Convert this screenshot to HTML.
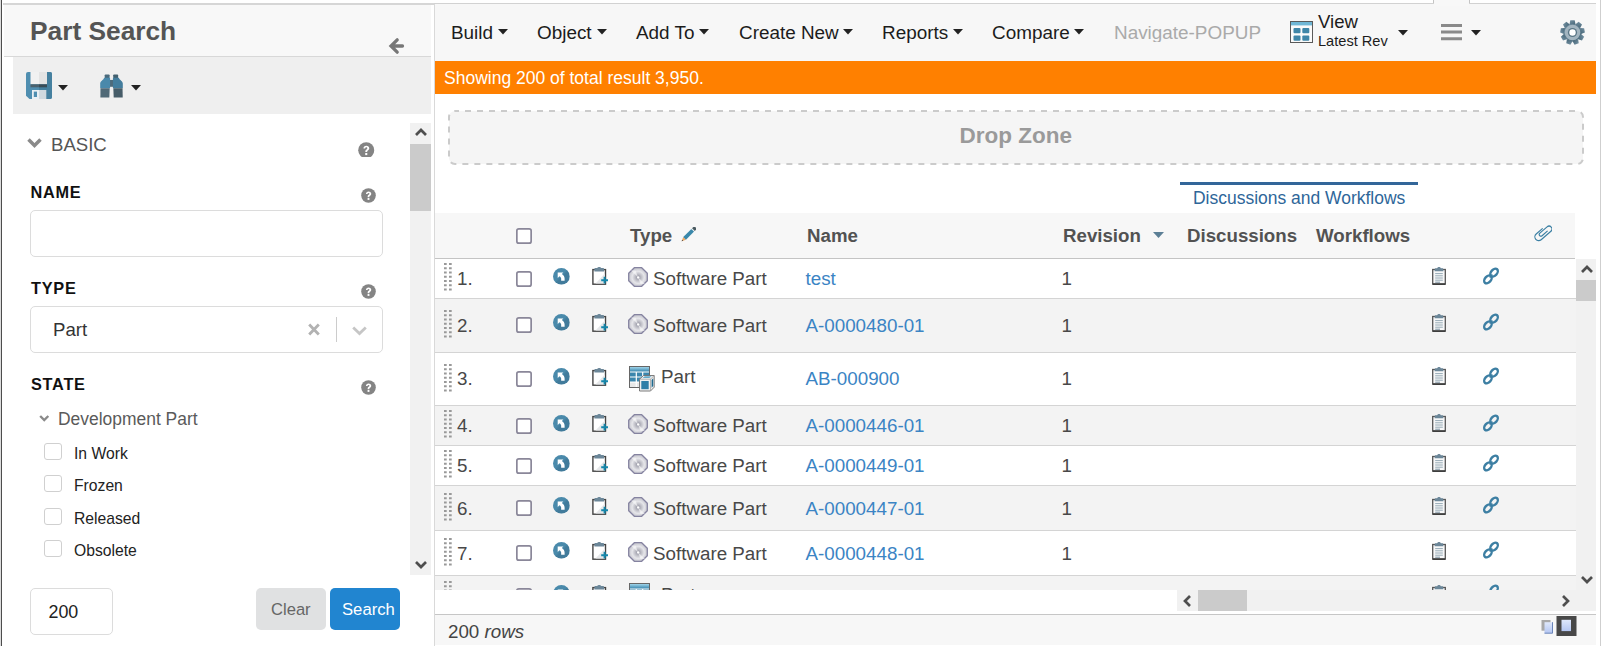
<!DOCTYPE html>
<html lang="en">
<head>
<meta charset="utf-8">
<title>Part Search</title>
<style>
*{box-sizing:border-box;margin:0;padding:0}
html,body{width:1601px;height:646px;overflow:hidden;background:#fff}
body{font-family:"Liberation Sans",sans-serif;color:#333;position:relative;font-size:18px}
.abs{position:absolute}
.t{position:absolute;white-space:nowrap;line-height:1;margin-top:.8px}
svg.ic{position:absolute;overflow:visible}
#leftedge{left:0;top:0;width:2px;height:646px;background:#4d4d4d;border-left:1px solid #dcdcdc}
#topline{left:3px;top:3px;width:431px;height:2px;background:#d6d6d6}
#topline2{left:434px;top:3px;width:1162px;height:1px;background:#d2d2d2}
#notch{left:1434px;top:0;width:35px;height:6px;background:#f8f8f8}
.nl{top:0;width:1px;height:3px;background:#c4c4c4}
#redge{left:1600px;top:0;width:1px;height:646px;background:#cfcfcf}
#lhead{left:4px;top:5px;width:427px;height:51px;background:#f8f8f8}
#lheadb{left:4px;top:56px;width:427px;height:1px;background:#d8d8d8}
#ltool{left:13px;top:57px;width:418px;height:57px;background:#efefef}
#lsep{left:434px;top:4px;width:1px;height:642px;background:#d9d9d9}
#lscroll{left:410px;top:123px;width:21px;height:452px;background:#f1f1f1}
#lthumb{left:410px;top:144px;width:21px;height:67px;background:#cbcbcb}
.lbl{margin-top:0;font-weight:bold;font-size:16.3px;color:#111;letter-spacing:.75px}
.inp{border:1px solid #dcdcdc;border-radius:5px;background:#fff}
.cb{width:18px;height:17px;border:1px solid #d0d0d0;border-radius:3px;background:#fff}
.cbl{font-size:15.7px;color:#222;margin-top:0}
#rtool{left:435px;top:4px;width:1161px;height:57px;background:#f7f7f7}
#orange{left:435px;top:61px;width:1161px;height:33px;background:#ff8000}
.menu{font-size:18.9px;color:#1c1c1c;top:23px}
#dz{left:449px;top:111px;width:1134px;height:53px;border-radius:6px;background:#f5f5f5}
#thead{left:435px;top:213px;width:1140px;height:45px;background:#f7f7f7}
#theadb{left:435px;top:258px;width:1140px;height:1px;background:#c4c4c4}
.th{font-weight:bold;font-size:18.7px;color:#525252;top:226px}
.row{left:435px;width:1141px;border-bottom:1px solid #d4d4d4;background:#fff}
.row.alt{background:#f3f3f3}
.rcb{width:17px;height:17px;border:2px solid #908e9e;border-radius:2.5px;background:#fff}
.rt{margin-top:0}
.num,.ty,.rev{font-size:18.8px;color:#484848}
.lnk{font-size:18.8px;color:#3b84c4}
#cover{left:435px;top:590px;width:1161px;height:24px;background:#fff}
#vscroll{left:1576px;top:259px;width:20px;height:331px;background:#f1f1f1}
#vthumb{left:1576px;top:280px;width:20px;height:21px;background:#cbcbcb}
#hscroll{left:1177px;top:590px;width:419px;height:21px;background:#f1f1f1}
#hthumb{left:1198px;top:590px;width:49px;height:21px;background:#cbcbcb}
#foot{left:435px;top:614px;width:1161px;height:31px;background:#f7f7f7;border-top:1px solid #c6c6c6}
</style>
</head>
<body>
<svg width="0" height="0" style="position:absolute"><defs>
<linearGradient id="g-cd" x1="0" y1="0" x2="1" y2="1"><stop offset="0" stop-color="#b2b2ba"/><stop offset=".5" stop-color="#f0f0f3"/><stop offset="1" stop-color="#a6a6b0"/></linearGradient>
<radialGradient id="g-cd3" cx=".51" cy=".52" r=".5"><stop offset="0" stop-color="#8e8e9c"/><stop offset=".3" stop-color="#b9b9c2"/><stop offset=".65" stop-color="#e6e6ea"/><stop offset="1" stop-color="#c6c6ce"/></radialGradient>
<radialGradient id="g-cd2" cx=".5" cy=".5" r=".5"><stop offset="0" stop-color="#85859a"/><stop offset=".45" stop-color="#cacad2"/><stop offset="1" stop-color="#e9e9ee" stop-opacity=".2"/></radialGradient>
<linearGradient id="g-hd" x1="0" y1="0" x2="0" y2="1"><stop offset="0" stop-color="#9fd4ea"/><stop offset="1" stop-color="#2f7fa8"/></linearGradient>
<symbol id="i-caret" viewBox="0 0 10 6"><path d="M0 0h10L5 5.6z" fill="#222"/></symbol>
<symbol id="i-grip" viewBox="0 0 8 28"><g fill="#999">
<rect x="0" y="0.00" width="2.700" height="2"/><rect x="5" y="0.00" width="2.700" height="2"/>
<rect x="0" y="4.25" width="2.700" height="2"/><rect x="5" y="4.25" width="2.700" height="2"/>
<rect x="0" y="8.50" width="2.700" height="2"/><rect x="5" y="8.50" width="2.700" height="2"/>
<rect x="0" y="12.75" width="2.700" height="2"/><rect x="5" y="12.75" width="2.700" height="2"/>
<rect x="0" y="17.00" width="2.700" height="2"/><rect x="5" y="17.00" width="2.700" height="2"/>
<rect x="0" y="21.25" width="2.700" height="2"/><rect x="5" y="21.25" width="2.700" height="2"/>
<rect x="0" y="25.50" width="2.700" height="2"/><rect x="5" y="25.50" width="2.700" height="2"/>
</g></symbol>
<linearGradient id="g-nav" x1="0" y1="0" x2="1" y2="1"><stop offset=".45" stop-color="#4a8aab"/><stop offset=".55" stop-color="#417b9b"/></linearGradient><symbol id="i-nav" viewBox="0 0 17 17"><circle cx="8.500" cy="8.500" r="8.500" fill="url(#g-nav)"/>
<path d="M4.750 4.500H10.500L8.900 6.100C10.800 7.200 11.750 8.800 11.750 11V13H8.250V11C8.250 9.800 7.700 9 6.600 8.300L4.750 10.100Z" fill="#fff"/></symbol>
<symbol id="i-clipadd" viewBox="0 0 17 19">
<rect x=".9" y="2.6" width="12.6" height="14.6" fill="#fff" stroke="#444" stroke-width="1.4"/>
<path d="M12.8 6.5v10H3.5z" fill="#e6e8ea"/>
<path d="M2.400 4.600V2c0-.6.400-1 1-1h1.800C5.600.300 6.400 0 7.200 0s1.600.300 2 1H11c.6 0 1 .4 1 1v2.600z" fill="#6c8799"/>
<path d="M12.600 9.800v6.800M9.200 13.200h6.800" stroke="#1587ab" stroke-width="2" fill="none"/>
</symbol>
<symbol id="i-cd" viewBox="0 0 20 20">
<path d="M6.300 .7h7.400L19.300 6.300v7.400L13.700 19.300H6.300L.7 13.700V6.300z" fill="url(#g-cd3)" stroke="#8583a0" stroke-width="1.300" stroke-linejoin="round"/>
<path d="M10 10.300L3 3.500h4.500zM10 10.300L17 17h-4.500z" fill="#fff" opacity=".55"/>
<circle cx="10.200" cy="10.400" r="1.200" fill="#fff"/>
</symbol>
<symbol id="i-part" viewBox="0 0 26 26">
<rect x=".5" y=".5" width="20" height="21" fill="#fff" stroke="#666" stroke-width="1"/>
<rect x="1" y="1" width="19" height="5" fill="url(#g-hd)"/>
<rect x="1" y="6" width="19" height="10" fill="#3b86ad"/>
<path d="M1 6h19M1 11h19M1 16h19M7.300 6v15M13.700 6v15" stroke="#fff" stroke-width="1.200" fill="none"/>
<rect x="1" y="16.600" width="19" height="4.400" fill="#e8e8e8"/>
<path d="M7.300 16v5M13.700 16v5" stroke="#fff" stroke-width="1.200"/>
<path d="M10.500 13.200l4-3.700h10.700v11.700l-3.700 3.800h-11z" fill="#f0f0f0" stroke="#6e6e6e" stroke-width=".9"/>
<path d="M10.500 13.200h11v11.800M21.500 13.200l3.700-3.700" fill="none" stroke="#9a9a9a" stroke-width=".7"/>
<rect x="12.300" y="15" width="7.400" height="8.200" fill="#2f7fa8"/>
<path d="M13.600 12l2.200-1.700h6.800L20.400 12z" fill="#63abcb"/>
<path d="M22.600 14l1.600-1.700V20l-1.600 1.800z" fill="#1f6a90"/>
</symbol>
<symbol id="i-clip" viewBox="0 0 14 18">
<rect x=".7" y="2.500" width="12.600" height="14.600" fill="#f7f8f9" stroke="#555" stroke-width="1.300"/>
<path d="M.7 17.100h12.600" stroke="#333" stroke-width="1.500"/>
<path d="M2.700 4.200V2.200c0-.6.400-1 1-1h1.400C5.400.4 6.200 0 7 0s1.600.4 1.900 1.200h1.400c.6 0 1 .4 1 1v2z" fill="#6c8799"/>
<path d="M3.200 6.600h7.600M3.200 8.800h7.600M3.200 11h7.600M3.200 13.200h7.600" stroke="#8aa0ae" stroke-width=".9" fill="none"/>
<path d="M3.200 15.200h4.800" stroke="#6c8799" stroke-width=".9"/>
</symbol>
<symbol id="i-link" viewBox="0 0 18 18">
<g fill="none" stroke="#3d7fa3" stroke-width="2.400" transform="rotate(-48 9 9)">
<ellipse cx="4.400" cy="9" rx="4.500" ry="3"/>
<ellipse cx="13.600" cy="9" rx="4.500" ry="3"/>
<path d="M7 9h4" stroke-width="1.400"/>
</g></symbol>
<symbol id="i-help" viewBox="0 0 16 16"><circle cx="8" cy="8" r="7.800" fill="#848484"/>
<path d="M5.300 6.300c0-1.600 1.200-2.600 2.800-2.600s2.800 1 2.800 2.400c0 1.100-.6 1.700-1.300 2.200-.5.400-.7.600-.7 1.200v.3H7.100v-.5c0-1 .4-1.500 1.100-2 .5-.4.800-.7.800-1.200s-.4-.9-1-.9-1 .4-1.100 1.100z" fill="#fff"/><rect x="7" y="10.700" width="2" height="2" fill="#fff"/></symbol>
<symbol id="i-chev" viewBox="0 0 16 11"><path d="M1.600 1.600L8 8l6.400-6.400" fill="none" stroke="#8a8a8a" stroke-width="3.700"/></symbol>
<symbol id="i-sbup" viewBox="0 0 12 8"><path d="M1 7l5-5 5 5" fill="none" stroke="#4e4e4e" stroke-width="2.700"/></symbol>
<symbol id="i-sbdn" viewBox="0 0 12 8"><path d="M1 1l5 5 5-5" fill="none" stroke="#4e4e4e" stroke-width="2.700"/></symbol>
<symbol id="i-sblt" viewBox="0 0 8 12"><path d="M7 1L2 6l5 5" fill="none" stroke="#4e4e4e" stroke-width="2.700"/></symbol>
<symbol id="i-sbrt" viewBox="0 0 8 12"><path d="M1 1l5 5-5 5" fill="none" stroke="#4e4e4e" stroke-width="2.700"/></symbol>
<symbol id="i-save" viewBox="0 0 26 27">
<path d="M2 0h22a2 2 0 0 1 2 2v23a2 2 0 0 1-2 2H3.500L0 23.800V2a2 2 0 0 1 2-2z" fill="#4f8eb0"/>
<path d="M13 0h11a2 2 0 0 1 2 2v23a2 2 0 0 1-2 2H13z" fill="#45809f"/>
<rect x="4.500" y="0" width="8.500" height="12.300" fill="#f1f1f1"/><rect x="13" y="0" width="8" height="12.300" fill="#e4e4e4"/>
<rect x="4.500" y="12.300" width="8.500" height="3" fill="#4b616d"/><rect x="13" y="12.300" width="8" height="3" fill="#3a4c57"/>
<rect x="6" y="18" width="7" height="9" fill="#e9eff3"/><rect x="13" y="18" width="7.300" height="9" fill="#d0d9df"/>
<rect x="7.800" y="19.600" width="3.200" height="5.400" fill="#4f8eb0"/>
</symbol>
<symbol id="i-bino" viewBox="0 0 24 24">
<rect x="4.800" y=".2" width="5" height="4" rx=".8" fill="#4a6a7c"/><rect x="13.500" y=".2" width="5" height="4" rx=".8" fill="#42606f"/>
<rect x="9.500" y="5.800" width="4.500" height="7" fill="#4e6b7b"/>
<path d="M4.200 3.600H10.300V14.400H.2V9.500C.2 7 3.400 6.200 4.200 3.600z" fill="#4a89ab"/>
<path d="M13.200 3.600H19.300C20.100 6.200 23.300 7 23.300 9.500V14.400H13.200z" fill="#437d9d"/>
<path d="M.5 14.400H9.900L9.500 23.700H.4z" fill="#506977"/><path d="M13.600 14.400H23L23.200 23.700H14z" fill="#465c68"/>
</symbol>
<symbol id="i-view" viewBox="0 0 23 22">
<rect x=".5" y=".5" width="22" height="21" fill="#fbfbfb" stroke="#5a5a5a" stroke-width="1"/>
<rect x="1" y="1" width="21" height="3.400" fill="#6fb7d6"/>
<rect x="3.500" y="7" width="7" height="5.300" rx="1" fill="#3f86a8"/><rect x="12.300" y="7" width="7" height="5.300" rx="1" fill="#3f86a8"/>
<rect x="3.500" y="14.500" width="7" height="5.300" rx="1" fill="#3f86a8"/><rect x="12.300" y="14.500" width="7" height="5.300" rx="1" fill="#3f86a8"/>
</symbol>
<linearGradient id="g-gear" x1="0" y1="0" x2="1" y2="1"><stop offset="0" stop-color="#7793a4"/><stop offset="1" stop-color="#466678"/></linearGradient>
<symbol id="i-gear" viewBox="-12.500 -12.500 25 25">
<g fill="url(#g-gear)">
<circle r="9"/>
<g id="tooth"><path d="M-2.200 -12.200h4.400l.8 4h-6z"/></g>
<use href="#tooth" transform="rotate(40)"/><use href="#tooth" transform="rotate(80)"/><use href="#tooth" transform="rotate(120)"/><use href="#tooth" transform="rotate(160)"/><use href="#tooth" transform="rotate(200)"/><use href="#tooth" transform="rotate(240)"/><use href="#tooth" transform="rotate(280)"/><use href="#tooth" transform="rotate(320)"/>
</g>
<circle r="7.800" fill="#a3b5c0"/>
<circle r="4.600" fill="#5a7686"/>
<circle r="3.200" fill="#fff"/>
</symbol>
<symbol id="i-pencil" viewBox="0 0 15 15">
<g transform="rotate(-45 7.500 7.500)">
<path d="M-2.200 7.500l4.200-1.900v3.800z" fill="#f0a860"/><path d="M-2.200 7.500l1.500-.7v1.400z" fill="#444"/>
<rect x="2" y="5.600" width="11.500" height="3.800" fill="#3a88aa"/>
<rect x="13.500" y="5.600" width="1" height="3.800" fill="#e8eef0"/>
<rect x="14.500" y="5.600" width="3" height="3.800" fill="#4a5a60"/>
</g></symbol>
<symbol id="i-paperclip" viewBox="0 0 18 17">
<g transform="translate(9.200 7.900) rotate(-41) translate(-10.400 -4.400)" fill="none" stroke="#3a7fa3" stroke-width="1.150">
<path d="M13 .6H4.400a3.800 3.800 0 0 0 0 7.600H17.300a2.900 2.900 0 0 0 0-5.800H7.700a1.700 1.700 0 0 0 0 3.400H15"/>
</g></symbol>
<linearGradient id="g-fi" x1="0" y1="0" x2="0" y2="1"><stop offset="0" stop-color="#dfe8fb"/><stop offset="1" stop-color="#b4c6f2"/></linearGradient>
<symbol id="i-footic" viewBox="0 0 36 21">
<rect x=".5" y="4" width="9" height="10.700" fill="#a8a8a8"/>
<rect x="3.500" y="6.200" width="8" height="11" fill="url(#g-fi)"/><path d="M3.500 17.200h8V6.200" fill="none" stroke="#6a84b8" stroke-width="1"/>
<rect x="15.500" y="0" width="20" height="20" fill="#484848"/>
<rect x="20.500" y="3.800" width="9.500" height="11.300" fill="url(#g-fi)"/>
</symbol>
<symbol id="i-cb" viewBox="0 0 16 16"><rect x=".85" y=".85" width="14.300" height="14.300" rx="2" fill="#fff" stroke="#8a8799" stroke-width="1.700"/></symbol>
</defs></svg>
<div class="abs" id="leftedge"></div>
<div class="abs" id="topline"></div>
<div class="abs" id="topline2"></div>
<div class="abs" id="redge"></div>
<div class="abs" id="lhead"></div>
<div class="abs" id="lheadb"></div>
<div class="abs" id="ltool"></div>
<div class="abs" id="lsep"></div>
<div class="t" style="left:30px;top:17px;font-size:26.3px;font-weight:bold;color:#555">Part Search</div>
<svg class="ic" style="left:389px;top:38px" width="15" height="16" viewBox="0 0 15 16"><path d="M8.200 1.800L2 8l6.200 6.200M2.500 8h11" fill="none" stroke="#777" stroke-width="3.300" stroke-linecap="round" stroke-linejoin="miter"/></svg>
<svg class="ic" style="left:26px;top:72px" width="26" height="27"><use href="#i-save"/></svg>
<svg class="ic" style="left:58px;top:85px" width="10" height="6"><use href="#i-caret"/></svg>
<svg class="ic" style="left:100.300px;top:73.500px" width="23.500" height="24"><use href="#i-bino"/></svg>
<svg class="ic" style="left:131px;top:85px" width="10" height="6"><use href="#i-caret"/></svg>

<div class="abs" id="lscroll"></div>
<div class="abs" id="lthumb"></div>
<svg class="ic" style="left:414.500px;top:128px" width="12" height="8"><use href="#i-sbup"/></svg>
<svg class="ic" style="left:414.500px;top:561px" width="12" height="8"><use href="#i-sbdn"/></svg>

<svg class="ic" style="left:26.500px;top:138px" width="15" height="10.300"><use href="#i-chev"/></svg>
<div class="t" style="left:51px;top:135px;font-size:18.600px;color:#555">BASIC</div>
<div class="abs" style="left:357px;top:141px;width:18px;height:16px;overflow:hidden"><svg class="ic" style="left:1px;top:1px" width="16.500" height="16.500"><use href="#i-help"/></svg></div>
<div class="t lbl" style="left:30.500px;top:184px">NAME</div>
<svg class="ic" style="left:360.500px;top:187.500px" width="15" height="15"><use href="#i-help"/></svg>
<div class="abs inp" style="left:30px;top:210px;width:353px;height:47px"></div>
<div class="t lbl" style="left:31px;top:280px">TYPE</div>
<svg class="ic" style="left:360.500px;top:283.500px" width="15" height="15"><use href="#i-help"/></svg>
<div class="abs inp" style="left:30px;top:306px;width:353px;height:47px"></div>
<div class="t" style="left:53px;top:320px;font-size:18.600px;color:#333">Part</div>
<svg class="ic" style="left:307.500px;top:323px" width="12" height="13" viewBox="0 0 12 13"><path d="M1.200 1.500l9.600 10M10.800 1.500L1.200 11.500" stroke="#b2b2b2" stroke-width="2.800" fill="none"/></svg>
<div class="abs" style="left:336px;top:317px;width:1px;height:25px;background:#ccc"></div>
<svg class="ic" style="left:352px;top:325.500px" width="15" height="10" viewBox="0 0 15 10"><path d="M1.200 1.500l6.300 6L13.800 1.500" stroke="#c6c6c6" stroke-width="2.800" fill="none"/></svg>
<div class="t lbl" style="left:31px;top:376px">STATE</div>
<svg class="ic" style="left:360.500px;top:379.500px" width="15" height="15"><use href="#i-help"/></svg>
<svg class="ic" style="left:39px;top:415px" width="10.500" height="7"><use href="#i-chev"/></svg>
<div class="t" style="left:58px;top:410px;font-size:17.450px;color:#5a5a5a">Development Part</div>
<div class="abs cb" style="left:44px;top:443px"></div><div class="t cbl" style="left:74px;top:446px">In Work</div>
<div class="abs cb" style="left:44px;top:475px"></div><div class="t cbl" style="left:74px;top:478px">Frozen</div>
<div class="abs cb" style="left:44px;top:508px"></div><div class="t cbl" style="left:74px;top:511px">Released</div>
<div class="abs cb" style="left:44px;top:540px"></div><div class="t cbl" style="left:74px;top:543px">Obsolete</div>

<div class="abs inp" style="left:30px;top:588px;width:83px;height:47px"></div>
<div class="t" style="left:48.500px;top:603px;font-size:17.850px;color:#222">200</div>
<div class="abs" style="left:256px;top:588px;width:70px;height:42px;border-radius:5px;background:#e0e1e2"></div>
<div class="t" style="left:270.500px;top:600.500px;font-size:17.200px;color:#666;transform:scaleX(.965);transform-origin:0 0">Clear</div>
<div class="abs" style="left:330px;top:588px;width:70px;height:42px;border-radius:5px;background:#2185d0"></div>
<div class="t" style="left:342px;top:600.500px;font-size:17.200px;color:#fff;transform:scaleX(.97);transform-origin:0 0">Search</div>

<div class="abs" id="rtool"></div>
<div class="abs" id="notch"></div><div class="abs nl" style="left:1433px"></div><div class="abs nl" style="left:1469px"></div>
<div class="abs" id="orange"></div>
<div class="t menu" style="left:451px">Build</div><svg class="ic" style="left:498.1px;top:29.300px" width="10" height="6"><use href="#i-caret"/></svg>
<div class="t menu" style="left:537px">Object</div><svg class="ic" style="left:596.6px;top:29.300px" width="10" height="6"><use href="#i-caret"/></svg>
<div class="t menu" style="left:636px">Add To</div><svg class="ic" style="left:699.4px;top:29.300px" width="10" height="6"><use href="#i-caret"/></svg>
<div class="t menu" style="left:739px">Create New</div><svg class="ic" style="left:842.8px;top:29.300px" width="10" height="6"><use href="#i-caret"/></svg>
<div class="t menu" style="left:882px">Reports</div><svg class="ic" style="left:952.6px;top:29.300px" width="10" height="6"><use href="#i-caret"/></svg>
<div class="t menu" style="left:992px">Compare</div><svg class="ic" style="left:1074.1px;top:29.300px" width="10" height="6"><use href="#i-caret"/></svg>
<div class="t menu" style="left:1114px;color:#aaa;height:18.500px;overflow:hidden">Navigate-POPUP</div>
<svg class="ic" style="left:1290px;top:20.500px" width="23" height="22"><use href="#i-view"/></svg>
<div class="t" style="left:1318px;top:12px;font-size:18.600px;color:#1c1c1c">View</div>
<div class="t" style="left:1318px;top:33.200px;font-size:14.600px;color:#1c1c1c">Latest Rev</div>
<svg class="ic" style="left:1397.9px;top:30.100px" width="10" height="6"><use href="#i-caret"/></svg>
<svg class="ic" style="left:1441px;top:23.500px" width="21" height="17" viewBox="0 0 21 17"><path d="M0 1.500h21M0 8h21M0 14.700h21" stroke="#8a8a8a" stroke-width="3" fill="none"/></svg>
<svg class="ic" style="left:1471px;top:30.100px" width="10" height="6"><use href="#i-caret"/></svg>
<svg class="ic" style="left:1559.500px;top:19.500px" width="25" height="25"><use href="#i-gear"/></svg>
<div class="t" style="left:444px;top:69px;font-size:17.500px;color:#fff">Showing 200 of total result 3,950.</div>

<div class="abs" id="dz"></div>
<svg class="ic" style="left:448px;top:110px" width="1136" height="55"><rect x="1" y="1" width="1134" height="53" rx="6" fill="none" stroke="#cbcbcb" stroke-width="2" stroke-dasharray="6 6" stroke-dashoffset="2"/></svg>
<div class="t" style="left:959.500px;top:124.500px;font-size:22.500px;font-weight:bold;color:#9a9a9a">Drop Zone</div>

<div class="abs" style="left:1180px;top:182px;width:238px;height:3px;background:#336699"></div>
<div class="t" style="left:1193px;top:189px;font-size:17.480px;color:#2e6699">Discussions and Workflows</div>

<div class="abs" id="thead"></div>
<div class="abs" id="theadb"></div>
<svg class="ic" style="left:515.500px;top:227.500px" width="16" height="16"><use href="#i-cb"/></svg>
<div class="t th" style="left:630px">Type</div>
<svg class="ic" style="left:681px;top:227px" width="15" height="15"><use href="#i-pencil"/></svg>
<div class="t th" style="left:807px">Name</div>
<div class="t th" style="left:1063px">Revision</div>
<svg class="ic" style="left:1153px;top:232px" width="11" height="6" viewBox="0 0 11 6"><path d="M0 0h11L5.500 6z" fill="#5c7f96"/></svg>
<div class="t th" style="left:1187px">Discussions</div>
<div class="t th" style="left:1316px">Workflows</div>
<svg class="ic" style="left:1534px;top:224.500px" width="18" height="17"><use href="#i-paperclip"/></svg>

<div class="abs row" style="top:259px;height:40px"></div>
<svg class="ic" style="left:444px;top:263.3px" width="8" height="28"><use href="#i-grip"/></svg>
<div class="t rt num" style="left:457px;top:270.2px">1.</div>
<svg class="ic" style="left:515.500px;top:270.5px" width="16" height="16"><use href="#i-cb"/></svg>
<svg class="ic" style="left:553.200px;top:267.6px" width="16.800" height="16.800"><use href="#i-nav"/></svg>
<svg class="ic" style="left:592px;top:267.3px" width="17" height="19"><use href="#i-clipadd"/></svg>
<svg class="ic" style="left:628px;top:267.0px" width="20" height="20"><use href="#i-cd"/></svg>
<div class="t rt ty" style="left:653px;top:270.2px">Software Part</div>
<div class="t rt lnk" style="left:805.500px;top:270.2px">test</div>
<div class="t rt rev" style="left:1061.500px;top:270.2px">1</div>
<svg class="ic" style="left:1432px;top:267.0px" width="14" height="18"><use href="#i-clip"/></svg>
<svg class="ic" style="left:1481.700px;top:266.9px" width="18" height="18"><use href="#i-link"/></svg>
<div class="abs row alt" style="top:299px;height:54px"></div>
<svg class="ic" style="left:444px;top:309.8px" width="8" height="28"><use href="#i-grip"/></svg>
<div class="t rt num" style="left:457px;top:316.7px">2.</div>
<svg class="ic" style="left:515.500px;top:317.0px" width="16" height="16"><use href="#i-cb"/></svg>
<svg class="ic" style="left:553.200px;top:314.1px" width="16.800" height="16.800"><use href="#i-nav"/></svg>
<svg class="ic" style="left:592px;top:313.8px" width="17" height="19"><use href="#i-clipadd"/></svg>
<svg class="ic" style="left:628px;top:313.5px" width="20" height="20"><use href="#i-cd"/></svg>
<div class="t rt ty" style="left:653px;top:316.7px">Software Part</div>
<div class="t rt lnk" style="left:805.500px;top:316.7px">A-0000480-01</div>
<div class="t rt rev" style="left:1061.500px;top:316.7px">1</div>
<svg class="ic" style="left:1432px;top:313.5px" width="14" height="18"><use href="#i-clip"/></svg>
<svg class="ic" style="left:1481.700px;top:313.4px" width="18" height="18"><use href="#i-link"/></svg>
<div class="abs row" style="top:353px;height:53px"></div>
<svg class="ic" style="left:444px;top:363.5px" width="8" height="28"><use href="#i-grip"/></svg>
<div class="t rt num" style="left:457px;top:370.4px">3.</div>
<svg class="ic" style="left:515.500px;top:370.7px" width="16" height="16"><use href="#i-cb"/></svg>
<svg class="ic" style="left:553.200px;top:367.8px" width="16.800" height="16.800"><use href="#i-nav"/></svg>
<svg class="ic" style="left:592px;top:367.5px" width="17" height="19"><use href="#i-clipadd"/></svg>
<svg class="ic" style="left:628.500px;top:366.1px" width="26" height="26"><use href="#i-part"/></svg>
<div class="t rt ty" style="left:661px;top:368.4px">Part</div>
<div class="t rt lnk" style="left:805.500px;top:370.4px">AB-000900</div>
<div class="t rt rev" style="left:1061.500px;top:370.4px">1</div>
<svg class="ic" style="left:1432px;top:367.2px" width="14" height="18"><use href="#i-clip"/></svg>
<svg class="ic" style="left:1481.700px;top:367.1px" width="18" height="18"><use href="#i-link"/></svg>
<div class="abs row alt" style="top:406px;height:40px"></div>
<svg class="ic" style="left:444px;top:410.3px" width="8" height="28"><use href="#i-grip"/></svg>
<div class="t rt num" style="left:457px;top:417.2px">4.</div>
<svg class="ic" style="left:515.500px;top:417.5px" width="16" height="16"><use href="#i-cb"/></svg>
<svg class="ic" style="left:553.200px;top:414.6px" width="16.800" height="16.800"><use href="#i-nav"/></svg>
<svg class="ic" style="left:592px;top:414.3px" width="17" height="19"><use href="#i-clipadd"/></svg>
<svg class="ic" style="left:628px;top:414.0px" width="20" height="20"><use href="#i-cd"/></svg>
<div class="t rt ty" style="left:653px;top:417.2px">Software Part</div>
<div class="t rt lnk" style="left:805.500px;top:417.2px">A-0000446-01</div>
<div class="t rt rev" style="left:1061.500px;top:417.2px">1</div>
<svg class="ic" style="left:1432px;top:414.0px" width="14" height="18"><use href="#i-clip"/></svg>
<svg class="ic" style="left:1481.700px;top:413.9px" width="18" height="18"><use href="#i-link"/></svg>
<div class="abs row" style="top:446px;height:40px"></div>
<svg class="ic" style="left:444px;top:450.3px" width="8" height="28"><use href="#i-grip"/></svg>
<div class="t rt num" style="left:457px;top:457.2px">5.</div>
<svg class="ic" style="left:515.500px;top:457.5px" width="16" height="16"><use href="#i-cb"/></svg>
<svg class="ic" style="left:553.200px;top:454.6px" width="16.800" height="16.800"><use href="#i-nav"/></svg>
<svg class="ic" style="left:592px;top:454.3px" width="17" height="19"><use href="#i-clipadd"/></svg>
<svg class="ic" style="left:628px;top:454.0px" width="20" height="20"><use href="#i-cd"/></svg>
<div class="t rt ty" style="left:653px;top:457.2px">Software Part</div>
<div class="t rt lnk" style="left:805.500px;top:457.2px">A-0000449-01</div>
<div class="t rt rev" style="left:1061.500px;top:457.2px">1</div>
<svg class="ic" style="left:1432px;top:454.0px" width="14" height="18"><use href="#i-clip"/></svg>
<svg class="ic" style="left:1481.700px;top:453.9px" width="18" height="18"><use href="#i-link"/></svg>
<div class="abs row alt" style="top:486px;height:45px"></div>
<svg class="ic" style="left:444px;top:492.8px" width="8" height="28"><use href="#i-grip"/></svg>
<div class="t rt num" style="left:457px;top:499.7px">6.</div>
<svg class="ic" style="left:515.500px;top:500.0px" width="16" height="16"><use href="#i-cb"/></svg>
<svg class="ic" style="left:553.200px;top:497.1px" width="16.800" height="16.800"><use href="#i-nav"/></svg>
<svg class="ic" style="left:592px;top:496.8px" width="17" height="19"><use href="#i-clipadd"/></svg>
<svg class="ic" style="left:628px;top:496.5px" width="20" height="20"><use href="#i-cd"/></svg>
<div class="t rt ty" style="left:653px;top:499.7px">Software Part</div>
<div class="t rt lnk" style="left:805.500px;top:499.7px">A-0000447-01</div>
<div class="t rt rev" style="left:1061.500px;top:499.7px">1</div>
<svg class="ic" style="left:1432px;top:496.5px" width="14" height="18"><use href="#i-clip"/></svg>
<svg class="ic" style="left:1481.700px;top:496.4px" width="18" height="18"><use href="#i-link"/></svg>
<div class="abs row" style="top:531px;height:45px"></div>
<svg class="ic" style="left:444px;top:537.8px" width="8" height="28"><use href="#i-grip"/></svg>
<div class="t rt num" style="left:457px;top:544.7px">7.</div>
<svg class="ic" style="left:515.500px;top:545.0px" width="16" height="16"><use href="#i-cb"/></svg>
<svg class="ic" style="left:553.200px;top:542.1px" width="16.800" height="16.800"><use href="#i-nav"/></svg>
<svg class="ic" style="left:592px;top:541.8px" width="17" height="19"><use href="#i-clipadd"/></svg>
<svg class="ic" style="left:628px;top:541.5px" width="20" height="20"><use href="#i-cd"/></svg>
<div class="t rt ty" style="left:653px;top:544.7px">Software Part</div>
<div class="t rt lnk" style="left:805.500px;top:544.7px">A-0000448-01</div>
<div class="t rt rev" style="left:1061.500px;top:544.7px">1</div>
<svg class="ic" style="left:1432px;top:541.5px" width="14" height="18"><use href="#i-clip"/></svg>
<svg class="ic" style="left:1481.700px;top:541.4px" width="18" height="18"><use href="#i-link"/></svg>
<div class="abs row alt" style="top:576px;height:41px"></div>
<svg class="ic" style="left:444px;top:580.8px" width="8" height="28"><use href="#i-grip"/></svg>
<div class="t rt num" style="left:457px;top:587.7px">8.</div>
<svg class="ic" style="left:515.500px;top:588.0px" width="16" height="16"><use href="#i-cb"/></svg>
<svg class="ic" style="left:553.200px;top:585.1px" width="16.800" height="16.800"><use href="#i-nav"/></svg>
<svg class="ic" style="left:592px;top:584.8px" width="17" height="19"><use href="#i-clipadd"/></svg>
<svg class="ic" style="left:628.500px;top:583.4px" width="26" height="26"><use href="#i-part"/></svg>
<div class="t rt ty" style="left:661px;top:585.7px">Part</div>
<div class="t rt lnk" style="left:805.500px;top:587.7px">A-0001177-01</div>
<div class="t rt rev" style="left:1061.500px;top:587.7px">1</div>
<svg class="ic" style="left:1432px;top:584.5px" width="14" height="18"><use href="#i-clip"/></svg>
<svg class="ic" style="left:1481.700px;top:584.4px" width="18" height="18"><use href="#i-link"/></svg>
<div class="abs" id="cover"></div>
<div class="abs" id="vscroll"></div>
<div class="abs" id="vthumb"></div>
<svg class="ic" style="left:1580.500px;top:264.500px" width="12" height="8"><use href="#i-sbup"/></svg>
<svg class="ic" style="left:1580.500px;top:575.500px" width="12" height="8"><use href="#i-sbdn"/></svg>
<div class="abs" id="hscroll"></div>
<div class="abs" id="hthumb"></div>
<svg class="ic" style="left:1182.500px;top:594.500px" width="8" height="12"><use href="#i-sblt"/></svg>
<svg class="ic" style="left:1562px;top:594.500px" width="8" height="12"><use href="#i-sbrt"/></svg>
<div class="abs" id="foot"></div>
<div class="t" style="left:448px;top:621.800px;font-size:18.750px;color:#444">200 <i>rows</i></div>
<svg class="ic" style="left:1540.900px;top:616px" width="36" height="21"><use href="#i-footic"/></svg>

</body>
</html>
